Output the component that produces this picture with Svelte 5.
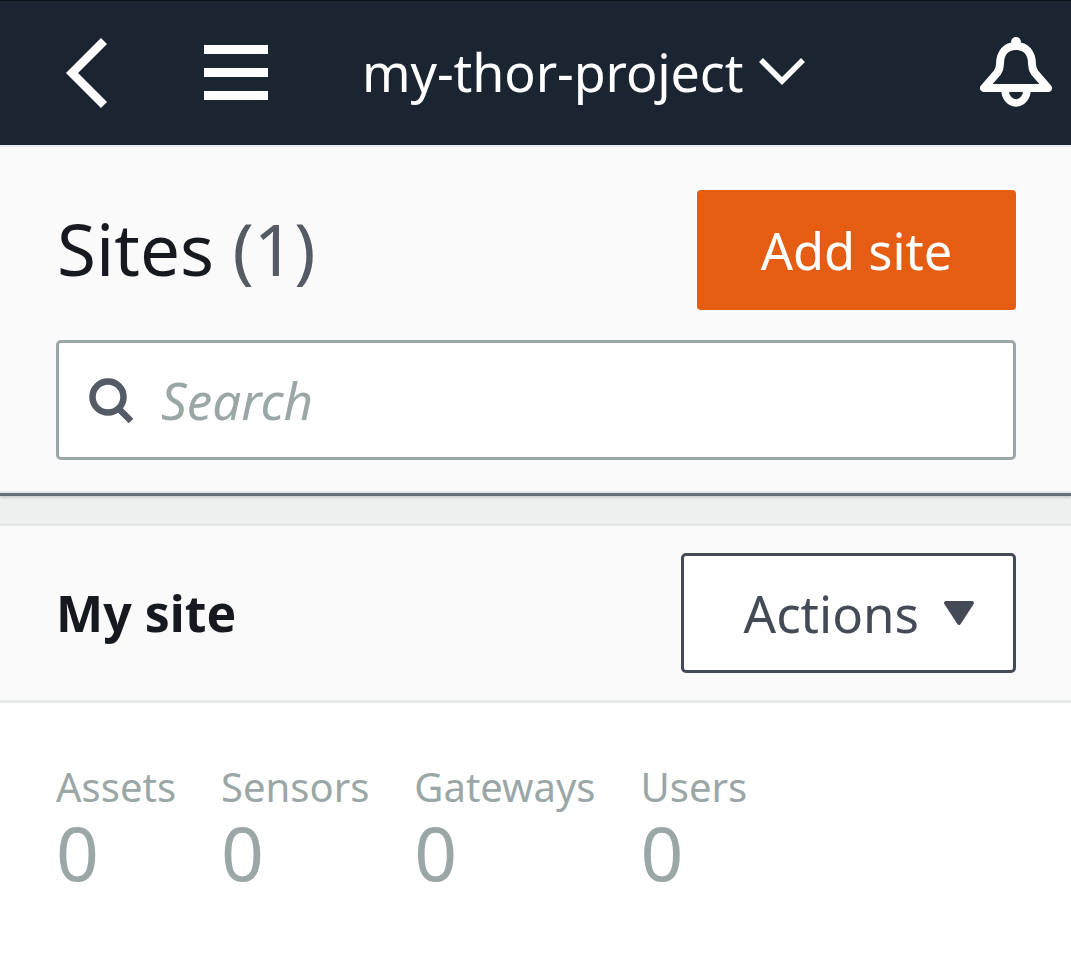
<script>
  const stats = [
    { label: 'Assets', value: 0 },
    { label: 'Sensors', value: 0 },
    { label: 'Gateways', value: 0 },
    { label: 'Users', value: 0 }
  ];
</script>

<div class="page">
  <header class="topbar">
    <button class="icon-btn back" aria-label="Back">
      <svg width="44" height="72" viewBox="0 0 44 72">
        <path d="M39 4 L7 36 L39 68" fill="none" stroke="#fff" stroke-width="8.500" />
      </svg>
    </button>
    <button class="icon-btn menu" aria-label="Menu">
      <span></span><span></span><span></span>
    </button>
    <div class="project">
      <span class="project-name">my-thor-project</span>
      <svg width="46" height="28" viewBox="0 0 46 28">
        <path d="M2 3 L23 24 L44 3" fill="none" stroke="#fff" stroke-width="5.500" />
      </svg>
    </div>
    <button class="icon-btn bell" aria-label="Notifications">
      <svg width="72" height="72" viewBox="0 0 72 72">
        <path d="M36 9 C26 9 20 16 20 27 C20 32 19 33 17 36 L4 51 L68 51 L55 36 C53 33 52 32 52 27 C52 16 46 9 36 9 Z" fill="none" stroke="#fff" stroke-width="8" stroke-linejoin="round" />
        <circle cx="36" cy="5" r="5" fill="#fff" />
        <path d="M25 53 A11 13 0 0 0 47 53" fill="none" stroke="#fff" stroke-width="7.500" />
      </svg>
    </button>
  </header>

  <section class="sites">
    <div class="sites-head">
      <h1>Sites <span class="count">(1)</span></h1>
      <button class="primary">Add site</button>
    </div>
    <div class="search">
      <svg width="46" height="46" viewBox="0 0 46 46">
        <circle cx="20" cy="20" r="15.500" fill="none" stroke="#545b64" stroke-width="6.500" />
        <path d="M30 31 L43 44" fill="none" stroke="#545b64" stroke-width="6.500" />
      </svg>
      <span class="placeholder">Search</span>
    </div>
  </section>

  <div class="gap"></div>

  <section class="site-row">
    <h2>My site</h2>
    <button class="actions">
      Actions
      <svg width="32" height="26" viewBox="0 0 32 26">
        <path d="M3 3 H29 L16 23 Z" fill="#444b56" stroke="#444b56" stroke-width="4" stroke-linejoin="round" />
      </svg>
    </button>
  </section>

  <section class="stats">
    {#each stats as stat}
      <div class="stat">
        <div class="label">{stat.label}</div>
        <div class="value">{stat.value}</div>
      </div>
    {/each}
  </section>
</div>

<style>
  :global(body) {
    margin: 0;
    background: #fff;
  }

  .page {
    width: 1071px;
    height: 969px;
    overflow: hidden;
    font-family: "Noto Sans", "Open Sans", sans-serif;
  }

  button {
    font-family: inherit;
    cursor: pointer;
  }

  .topbar {
    box-sizing: border-box;
    height: 147px;
    display: flex;
    align-items: center;
    padding-left: 65px;
    padding-bottom: 2px;
    background: #1b2431;
    border-top: 1px solid #0c1118;
    border-bottom: 2px solid #e6ecef;
  }

  .icon-btn {
    padding: 0;
    border: 0;
    background: none;
    display: flex;
  }

  .back {
    margin-top: 2px;
  }

  .menu {
    flex-direction: column;
    gap: 14px;
    margin-left: 95px;
  }

  .menu span {
    display: block;
    width: 64px;
    height: 9px;
    background: #fff;
  }

  .project {
    display: flex;
    align-items: center;
    gap: 16px;
    margin-left: 94px;
    color: #fff;
    font-size: 52px;
    letter-spacing: -0.1px;
  }

  .project-name {
    margin-top: -2px;
  }

  .project svg {
    margin-top: -3px;
  }

  .bell {
    margin-left: auto;
    margin-right: 19px;
    margin-top: 2px;
  }

  .sites {
    position: relative;
    box-sizing: border-box;
    height: 349px;
    padding: 43px 55px 0 56px;
    background: #fafafa;
    border-bottom: 3px solid #687078;
    box-shadow: inset 0 -2px 0 #e1e7e7, 0 2px 2px #ccd1d1;
  }

  .sites-head {
    display: flex;
    justify-content: space-between;
    align-items: center;
    height: 120px;
    padding-left: 1px;
  }

  h1 {
    margin: -3px 0 0;
    font-size: 71px;
    font-weight: 400;
    color: #16191f;
  }

  .count {
    color: #545b64;
  }

  .primary {
    width: 319px;
    height: 120px;
    border: 0;
    border-radius: 4px;
    background: #e45d12;
    color: #fff;
    font-size: 50.500px;
  }

  .search {
    box-sizing: border-box;
    height: 120px;
    margin-top: 30px;
    display: flex;
    align-items: center;
    gap: 27px;
    padding-left: 29px;
    background: #fff;
    border: 3px solid #9ba7a6;
    border-radius: 5px;
  }

  .placeholder {
    color: #9ba7a6;
    font-size: 51px;
    font-style: italic;
  }

  .gap {
    height: 27px;
    background: #eef0f0;
    border-bottom: 3px solid #e4e8e9;
  }

  .site-row {
    box-sizing: border-box;
    height: 177px;
    display: flex;
    justify-content: space-between;
    align-items: center;
    padding: 0 55px 0 56px;
    background: #fafafa;
    border-bottom: 3px solid #e6e9ea;
  }

  h2 {
    margin: 0;
    font-size: 50px;
    font-weight: 700;
    color: #16191f;
  }

  .actions {
    box-sizing: border-box;
    width: 335px;
    height: 120px;
    display: flex;
    align-items: center;
    justify-content: flex-end;
    gap: 24px;
    padding: 0 38px 0 0;
    background: #fff;
    border: 3px solid #444b56;
    border-radius: 5px;
    color: #444b56;
    font-size: 51px;
  }

  .stats {
    display: flex;
    gap: 45px;
    padding: 61px 0 0 56px;
  }

  .label {
    color: #9ba7a6;
    font-size: 40px;
    line-height: 46px;
  }

  .value {
    color: #9ba7a6;
    font-size: 75px;
    line-height: 84px;
  }
</style>
